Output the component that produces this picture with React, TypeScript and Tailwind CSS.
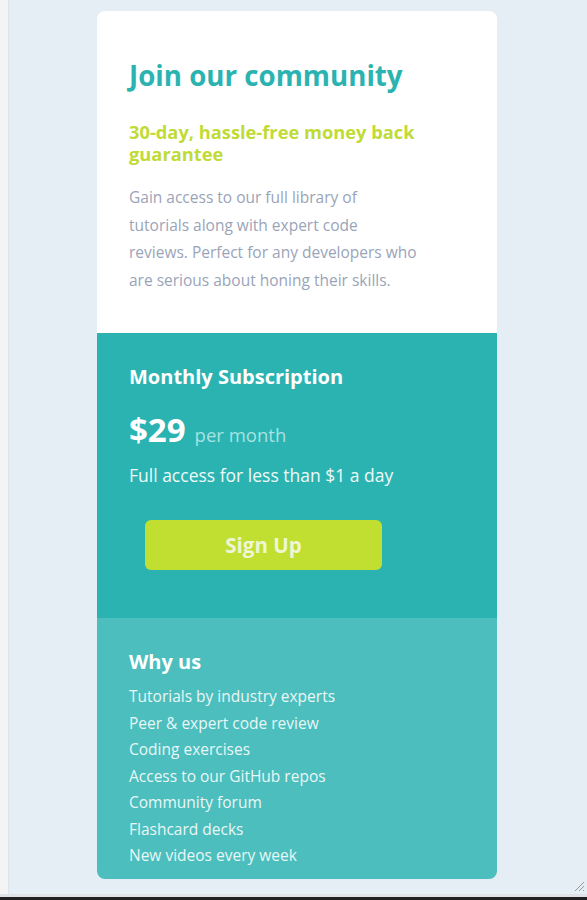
const features = [
  'Tutorials by industry experts',
  'Peer & expert code review',
  'Coding exercises',
  'Access to our GitHub repos',
  'Community forum',
  'Flashcard decks',
  'New videos every week',
];

export default function App() {
  return (
    <div className="flex h-[900px] w-full flex-col overflow-hidden font-['Open_Sans',sans-serif]">
      <div className="flex min-h-0 flex-1">
        {/* Left gutter */}
        <div className="w-[8px] bg-[#f4f4f4]" />
        <div className="w-[1px] bg-[#dde4ea]" />

        {/* Page */}
        <div className="relative flex flex-1 justify-center bg-[#e6eef5] pt-[11px] pr-[2px]">
          <div className="w-[400px] self-start overflow-hidden rounded-lg">
            <section className="bg-white px-8 pt-[46px] pb-[39px]">
              <h1 className="text-[27.7px] leading-[36px] font-bold text-[#2bb3b1]">Join our community</h1>
              <h2 className="mt-[28px] text-[18.3px] leading-[22px] font-bold text-[#c1db36]">
                30-day, hassle-free money back guarantee
              </h2>
              <p className="mt-[19px] text-[15.5px] leading-[27.5px] text-[#9aa4b8]">
                Gain access to our full library of
                <br />
                tutorials along with expert code
                <br />
                reviews. Perfect for any developers who
                <br />
                are serious about honing their skills.
              </p>
            </section>

            <section className="bg-[#2bb3b1] px-8 pt-[32px] pb-[48px]">
              <h3 className="text-[20px] leading-[24px] font-bold text-white">Monthly Subscription</h3>
              <div className="mt-[22px] flex items-baseline gap-[9px]">
                <span className="text-[33px] leading-[38px] font-bold text-white">$29</span>
                <span className="text-[18.5px] text-[#a6e2e1]">per month</span>
              </div>
              <p className="mt-[14px] text-[17.5px] leading-[24px] text-[#eefaf9]">Full access for less than $1 a day</p>
              <button className="mt-[33px] ml-4 h-[50px] w-[237px] rounded-md bg-[#c1df31] text-[20.5px] font-bold text-[#eef6d5]">
                Sign Up
              </button>
            </section>

            <section className="bg-[#4bbebd] px-8 pt-[32px] pb-[10px]">
              <h3 className="text-[20px] leading-[24px] font-bold text-white">Why us</h3>
              <ul className="mt-[9px] text-[15.5px] leading-[26.5px] text-[#e9f7f7]">
                {features.map((f) => (
                  <li key={f}>{f}</li>
                ))}
              </ul>
            </section>
          </div>

          {/* Resize grip */}
          <svg className="absolute right-[2px] bottom-[2px]" width="12" height="12" viewBox="0 0 12 12">
            <path d="M11 2 L2 11 M11 6 L6 11 M11 10 L10 11" stroke="#9a9a9a" strokeWidth="1" />
          </svg>
        </div>
      </div>
      <div className="h-[3px] bg-[#dfe3e7]" />
      <div className="h-[3px] bg-[#202020]" />
    </div>
  );
}
